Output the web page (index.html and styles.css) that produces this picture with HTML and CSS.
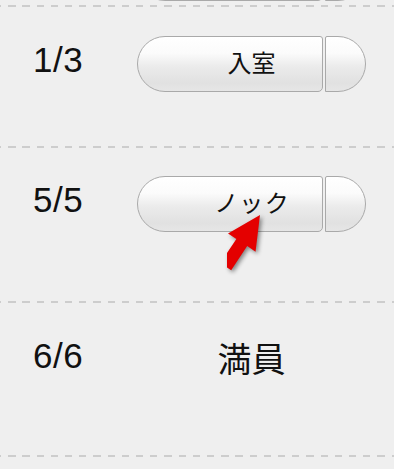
FILE: index.html
```html
<!DOCTYPE html>
<html lang="ja">
<head>
<meta charset="utf-8">
<link rel="stylesheet" href="styles.css">
</head>
<body>
<div class="list">
  <div class="prev">
    <div class="btn">
      <div class="pieces"><span class="piece left"></span><span class="piece right"></span></div>
    </div>
  </div>
  <div class="sep"></div>
  <div class="row row1">
    <div class="num">1/3</div>
    <div class="btn">
      <div class="pieces"><span class="piece left"></span><span class="piece right"></span></div>
      <span class="label">入室</span>
    </div>
  </div>
  <div class="sep"></div>
  <div class="row row2">
    <div class="num">5/5</div>
    <div class="btn">
      <div class="pieces"><span class="piece left"></span><span class="piece right"></span></div>
      <span class="label wide">ノック</span>
      <svg class="arrow" width="70" height="80" viewBox="0 0 70 80">
        <polygon transform="translate(33,3) rotate(33.5)" points="0,0 16.5,33 6.5,33 6.5,62 -6.5,62 -6.5,33 -16.5,33" fill="#e40000"/>
      </svg>
    </div>
  </div>
  <div class="sep"></div>
  <div class="row row3">
    <div class="num">6/6</div>
    <div class="slot"><span class="full">満員</span></div>
  </div>
  <div class="sep"></div>
</div>
</body>
</html>
```

FILE: styles.css
```css
html, body {
  margin: 0;
  padding: 0;
  background: #efefef;
}
body {
  width: 394px;
  height: 469px;
  overflow: hidden;
  font-family: "Liberation Sans", Arial, "Noto Sans CJK JP", sans-serif;
  color: #111;
}
.list {
  display: flex;
  flex-direction: column;
}
.sep {
  height: 2px;
  flex: none;
  background-image: repeating-linear-gradient(to right, #cdcdcd 0 1.3px, transparent 1.3px 8.2px, #cdcdcd 8.2px 14.2px);
}
.prev {
  height: 5px;
  overflow: hidden;
  display: flex;
  align-items: flex-end;
  padding-left: 137px;
}
.prev .btn {
  margin-bottom: 4px;
  flex: none;
}
.row {
  display: flex;
  align-items: flex-start;
  padding-left: 33px;
  box-sizing: border-box;
}
.row1 { height: 139px; padding-top: 29px; }
.row2 { height: 153px; padding-top: 28px; }
.row3 { height: 152px; padding-top: 29px; }
.num {
  width: 104px;
  flex: none;
  font-size: 35px;
  line-height: 40px;
  margin-top: 4px;
  letter-spacing: 0.5px;
}
.btn {
  position: relative;
  width: 229px;
  height: 56px;
  display: grid;
}
.pieces {
  grid-area: 1 / 1;
  display: flex;
  gap: 2px;
  height: 56px;
}
.piece {
  box-sizing: border-box;
  height: 56px;
  border: 1px solid #a9a9a9;
  background: linear-gradient(to bottom, #ffffff 0%, #fbfbfb 30%, #ebebeb 55%, #e1e1e1 85%, #e6e6e6 100%);
  box-shadow: inset 0 1px 0 #ffffff;
}
.piece.left {
  width: 186px;
  border-radius: 28px 3px 5px 28px;
}
.piece.right {
  width: 41px;
  border-radius: 2px 28px 28px 0;
}
.label {
  grid-area: 1 / 1;
  align-self: center;
  justify-self: center;
  font-family: "Noto Sans CJK JP", sans-serif;
  font-size: 24px;
  line-height: 30px;
  margin-top: -4px;
  color: #111;
  position: relative;
}
.label.wide {
  letter-spacing: 1.5px;
  margin-right: -1.5px;
}
.arrow {
  position: absolute;
  left: 90px;
  top: 36px;
  filter: drop-shadow(2px 2px 2px rgba(0, 0, 0, 0.45));
}
.slot {
  width: 229px;
  height: 56px;
  display: flex;
  align-items: center;
  justify-content: center;
}
.full {
  font-family: "Noto Sans CJK JP", sans-serif;
  font-size: 34px;
  line-height: 40px;
  margin-top: -4px;
  color: #111;
}
```
